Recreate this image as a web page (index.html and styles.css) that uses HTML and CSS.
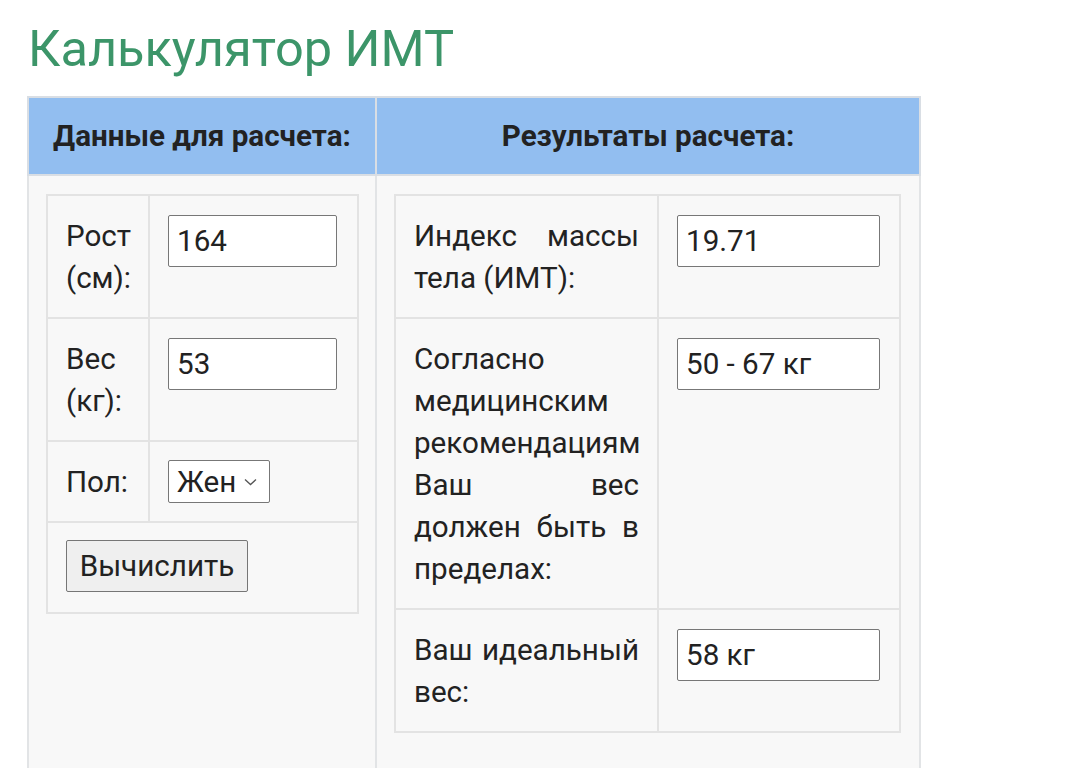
FILE: index.html
```html
<!DOCTYPE html>
<html lang="ru">
<head>
<meta charset="utf-8">
<title>Калькулятор ИМТ</title>
<link rel="stylesheet" href="styles.css">
</head>
<body>
<h1 class="title">Калькулятор ИМТ</h1>
<table class="calc">
  <colgroup><col class="col-left"><col class="col-right"></colgroup>
  <thead>
    <tr><th>Данные для расчета:</th><th>Результаты расчета:</th></tr>
  </thead>
  <tbody>
    <tr>
      <td class="outer-cell">
        <table class="inner inner-left">
          <colgroup><col class="il-1"><col class="il-2"></colgroup>
          <tr>
            <td class="label">Рост (см):</td>
            <td><input class="field field-left" type="text" value="164"></td>
          </tr>
          <tr>
            <td class="label">Вес (кг):</td>
            <td><input class="field field-left" type="text" value="53"></td>
          </tr>
          <tr>
            <td class="label">Пол:</td>
            <td>
              <div class="select">
                <span>Жен</span>
                <svg class="chev" width="13" height="8" viewBox="0 0 13 8"><path d="M1 1.5 L6.5 6.5 L12 1.5" fill="none" stroke="#555" stroke-width="1.3"/></svg>
              </div>
            </td>
          </tr>
          <tr>
            <td colspan="2"><button class="btn" type="button">Вычислить</button></td>
          </tr>
        </table>
      </td>
      <td class="outer-cell">
        <table class="inner inner-right">
          <colgroup><col class="ir-1"><col class="ir-2"></colgroup>
          <tr>
            <td class="label just">Индекс массы тела (ИМТ):</td>
            <td><input class="field field-right" type="text" value="19.71"></td>
          </tr>
          <tr>
            <td class="label just">Согласно медицинским рекомендациям Ваш вес должен быть в пределах:</td>
            <td><input class="field field-right" type="text" value="50 - 67 кг"></td>
          </tr>
          <tr>
            <td class="label just">Ваш идеальный вес:</td>
            <td><input class="field field-right" type="text" value="58 кг"></td>
          </tr>
        </table>
      </td>
    </tr>
  </tbody>
</table>
</body>
</html>
```
FILE: styles.css
```css
html, body {
  margin: 0;
  padding: 0;
  background: #ffffff;
}
body {
  padding: 0 27px;
  font-family: Roboto, "Noto Sans", sans-serif;
  color: #222222;
}
.title {
  margin: 20px 0 19px 1px;
  font-size: 50.5px;
  line-height: 57px;
  font-weight: 400;
  color: #3c9569;
}
.calc {
  border-collapse: collapse;
  width: 892px;
  table-layout: fixed;
}
.col-left { width: 348px; }
.col-right { width: 544px; }
.calc th {
  background: #92bef0;
  border: 2px solid #d9dee4;
  font-size: 29.6px;
  font-weight: 700;
  line-height: 38px;
  padding: 19px 2px 19px;
  color: #222;
  text-align: center;
}
.outer-cell {
  background: #f8f8f8;
  border: 2px solid #e2e4e6;
  border-top: 2px solid #dfe1e4;
  border-bottom: none;
  vertical-align: top;
  padding: 18px 18px 70px 17px;
}
.inner {
  border-collapse: collapse;
  table-layout: fixed;
  width: 100%;
}
.inner td {
  border: 2px solid #e3e3e3;
  padding: 19px 18px 18px;
  vertical-align: top;
  font-size: 29.6px;
  line-height: 42px;
  color: #222;
}
.il-1 { width: 102px; }
.il-2 { width: 209px; }
.ir-1 { width: 263px; }
.ir-2 { width: 242px; }
.just { text-align: justify; }
.field {
  display: block;
  box-sizing: border-box;
  height: 52px;
  margin: 0;
  padding: 0 8px;
  border: 1px solid #777;
  border-radius: 2px;
  background: #fff;
  font-family: Roboto, "Noto Sans", sans-serif;
  font-size: 29.6px;
  color: #222;
}
.field-left { width: 169px; }
.field-right { width: 203px; }
.select {
  display: flex;
  align-items: center;
  box-sizing: border-box;
  width: 102px;
  height: 43px;
  margin: -1px 0 -1px;
  padding: 0 6px 0 8px;
  border: 1px solid #777;
  border-radius: 2px;
  background: #fff;
  gap: 8px;
}
.select span {
  font-size: 29.6px;
  line-height: 30px;
}
.chev { flex: none; }
.btn {
  display: block;
  box-sizing: border-box;
  width: 182px;
  height: 52px;
  margin: -2px 0 2px;
  padding: 0;
  border: 1px solid #767676;
  border-radius: 2px;
  background: #efefef;
  font-family: Roboto, "Noto Sans", sans-serif;
  font-size: 29.6px;
  color: #222;
}
```
